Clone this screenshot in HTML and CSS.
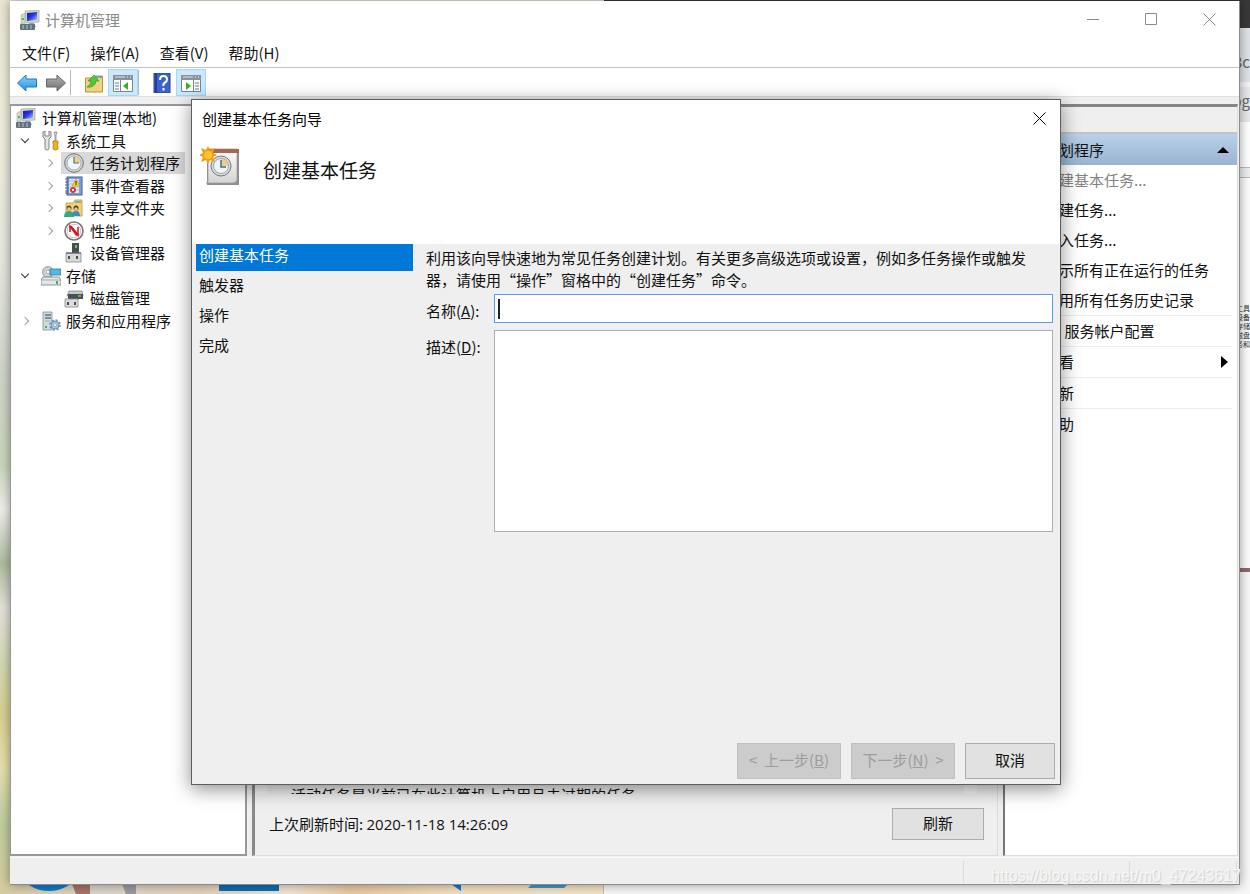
FILE: index.html
```html
<!DOCTYPE html>
<html lang="zh-CN">
<head>
    <meta charset="UTF-8">
    <meta name="viewport" content="width=device-width, initial-scale=1.0">
    <title>计算机管理</title>
    <link rel="stylesheet" href="styles.css">
</head>
<body>
    <!-- shared icons -->
    <svg class="defs" aria-hidden="true">
        <defs>
            <linearGradient id="g-screen" x1="0" y1="0" x2="1" y2="1">
                <stop offset="0" stop-color="#1414a8"/>
                <stop offset=".5" stop-color="#2a3be0"/>
                <stop offset="1" stop-color="#b8d0ff"/>
            </linearGradient>
            <linearGradient id="g-blue" x1="0" y1="0" x2="0" y2="1">
                <stop offset="0" stop-color="#8fd6fb"/>
                <stop offset="1" stop-color="#1b8fe0"/>
            </linearGradient>
            <linearGradient id="g-gray" x1="0" y1="0" x2="0" y2="1">
                <stop offset="0" stop-color="#b4b4b4"/>
                <stop offset="1" stop-color="#6e6e6e"/>
            </linearGradient>
            <linearGradient id="g-page" x1="0" y1="0" x2="0" y2="1">
                <stop offset="0" stop-color="#ffffff"/>
                <stop offset="1" stop-color="#d4d4d4"/>
            </linearGradient>
        </defs>
        <symbol id="i-computer" viewBox="0 0 20 20">
            <path d="M5 1l14-1v12l-13 1z" fill="#d3d5c6" stroke="#9b9d90" stroke-width=".6"/>
            <path d="M7 3l10-1v8l-10 1z" fill="url(#g-screen)"/>
            <path d="M1 5l4-2v11H1z" fill="#d5d8cc" stroke="#969a90" stroke-width=".5"/>
            <rect x="2" y="8" width="2" height="2" fill="#3cc63c"/>
            <path d="M9 13h5l2 4H8z" fill="#9fa39d"/>
            <rect x="0" y="14" width="15" height="6" rx="1" fill="#5f747e"/>
            <path d="M2 16h2M6 16h2M10 16h2M2 18h2M6 18h2M10 18h2" stroke="#b7c4ca"/>
        </symbol>
        <symbol id="i-tools" viewBox="0 0 20 20">
            <path d="M2 1v5l2 2v9q0 2 2 2t2-2V8l2-2V1L8 0v5H4V0z" fill="#e4e4e4" stroke="#777" stroke-width=".9"/>
            <path d="M13 1h3l-1 3v6h-1V4z" fill="#ddd" stroke="#888" stroke-width=".8"/>
            <path d="M12 10h5v3l-1 1 1 1v3q-2.500 2-5 0v-3l1-1-1-1z" fill="#f5b316" stroke="#a87400" stroke-width=".7"/>
        </symbol>
        <symbol id="i-clock" viewBox="0 0 20 20">
            <circle cx="10" cy="10" r="9.300" fill="#d8d8d8" stroke="#6d6d6d"/>
            <circle cx="10" cy="10" r="7" fill="#eef6fb" stroke="#8e9aa3" stroke-width=".8"/>
            <path d="M10 10V3.500A6.500 6.500 0 0 1 16.500 10z" fill="#f2cf85"/>
            <path d="M10 4v6h5" fill="none" stroke="#5a6e7d" stroke-width="1.200"/>
        </symbol>
        <symbol id="i-event" viewBox="0 0 20 20">
            <rect x="3" y="1" width="15" height="18" fill="#7f9fd2" stroke="#3f5f9c"/>
            <rect x="5" y="3" width="10" height="14" fill="#dfe8f6"/>
            <path d="M5 5h10M5 8h10M5 11h10M5 14h10" stroke="#8aa6d6" stroke-width=".7"/>
            <path d="M1 3h4M1 6h4M1 9h4M1 12h4M1 15h4M1 17h4" stroke="#596b8e"/>
            <path d="M12 3l4 7H8z" fill="#ffd42e" stroke="#b99008" stroke-width=".6"/>
            <path d="M12 5v4" stroke="#222"/>
            <circle cx="9" cy="14" r="3" fill="#df3737"/>
            <path d="M8 13l2 2M10 13l-2 2" stroke="#fff" stroke-width=".9"/>
        </symbol>
        <symbol id="i-share" viewBox="0 0 20 20">
            <path d="M2 5h7l2-3h7v16H2z" fill="#f2d27a" stroke="#bd9434" stroke-width=".8"/>
            <path d="M11 4h6" stroke="#4aa0df" stroke-width="1.300"/>
            <circle cx="5" cy="10" r="2.500" fill="#6b4a21"/>
            <circle cx="5" cy="11" r="1.800" fill="#eec29a"/>
            <path d="M0 19q0-6 5-6t5 6z" fill="#35a981"/>
            <circle cx="12" cy="10" r="2.500" fill="#513716"/>
            <circle cx="12" cy="11" r="1.800" fill="#eec29a"/>
            <path d="M8 18q0-5 4-5t4 5z" fill="#3f8cc0"/>
        </symbol>
        <symbol id="i-perf" viewBox="0 0 20 20">
            <circle cx="10" cy="10" r="9" fill="#fff" stroke="#777" stroke-width="1.600"/>
            <circle cx="10" cy="10" r="6.800" fill="none" stroke="#aaa" stroke-width=".7"/>
            <path d="M6 11V5l8 9V6" fill="none" stroke="#d42020" stroke-width="1.600"/>
            <path d="M5 5h3l7 9-3 1z" fill="#c81e1e"/>
        </symbol>
        <symbol id="i-device" viewBox="0 0 20 20">
            <rect x="8" y="0" width="7" height="11" fill="#4a4e50"/>
            <rect x="11" y="2" width="2" height="3" fill="#50d050"/>
            <path d="M2 10h15v9H2z" fill="#d7d9da" stroke="#85898b" stroke-width=".8"/>
            <path d="M2 10h15" stroke="#555"/>
            <path d="M4 13h2v3H4zM12 13h2v3h-2z" fill="#4b4f52"/>
        </symbol>
        <symbol id="i-storage" viewBox="0 0 20 20">
            <circle cx="7" cy="6" r="5.500" fill="#c8d0d4" stroke="#899297" stroke-width=".8"/>
            <circle cx="7" cy="6" r="1.600" fill="#fff" stroke="#899297" stroke-width=".5"/>
            <path d="M9 3h11v6H9z" fill="#55b6df" stroke="#2d7ea3" stroke-width=".8"/>
            <path d="M2 11h16l2 3v5H0v-5z" fill="#e3e5e6" stroke="#777d81" stroke-width=".8"/>
            <path d="M0 14h20" stroke="#9ca1a4" stroke-width=".8"/>
            <rect x="15" y="15" width="2" height="3" fill="#49b431"/>
        </symbol>
        <symbol id="i-disk" viewBox="0 0 20 20">
            <path d="M5 3h13l1 5H3z" fill="#c6c9cb" stroke="#777c7f" stroke-width=".7"/>
            <rect x="4" y="6" width="15" height="5" fill="#4a4e50"/>
            <path d="M14 8h3" stroke="#58df58" stroke-width="1.500"/>
            <path d="M1 11h13v8H1z" fill="#dadcdd" stroke="#85898b" stroke-width=".8"/>
            <path d="M3 14h2v3H3zM10 14h2v3h-2z" fill="#4b4f52"/>
        </symbol>
        <symbol id="i-services" viewBox="0 0 20 20">
            <path d="M2 1h9v18H2z" fill="#cfdadd" stroke="#7f8f96" stroke-width=".8"/>
            <path d="M4 4h6M4 7h6" stroke="#5c7681" stroke-width="1.300"/>
            <path d="M4 10h5" stroke="#9bb0b8"/>
            <rect x="4" y="15" width="2" height="2" fill="#4bb34b"/>
            <circle cx="14" cy="14" r="4" fill="#a9c6de" stroke="#6a92b4"/>
            <circle cx="14" cy="14" r="5" fill="none" stroke="#6a92b4" stroke-width="1.600" stroke-dasharray="2 1.930"/>
            <circle cx="14" cy="14" r="1.500" fill="#fff" stroke="#6a92b4" stroke-width=".6"/>
        </symbol>
    </svg>

    <div class="browser" aria-hidden="true">
        <div class="browser-tabs"></div>
        <div class="browser-address">3c</div>
        <div class="browser-bookmarks">pg</div>
        <div class="browser-row"></div>
        <div class="browser-row short"></div>
        <div class="browser-page">
            <div>工具</div>
            <div>设备</div>
            <div>存储</div>
            <div>磁盘</div>
            <div>服务和</div>
        </div>
    </div>
    <div class="wallpaper-shapes" aria-hidden="true">
        <svg width="604" height="10" viewBox="0 0 604 10">
            <ellipse cx="49" cy="-10" rx="26" ry="17" fill="#0f7bd0"/>
            <path d="M72 0h18v10H76z" fill="#9b5d50" opacity=".8"/>
            <path d="M122 0h14v10h-10z" fill="#8b8d95" opacity=".8"/>
            <path d="M219 0h60v7h-60z" fill="#0a6fb8"/>
            <path d="M451 0h10v7z" fill="#0a7be0"/>
            <path d="M532 0h36l-4 4h-36z" fill="#3f98c6"/>
            <path d="M604 0v10" stroke="#999"/>
        </svg>
    </div>

    <div class="window">
        <header class="titlebar">
            <svg class="icon"><use href="#i-computer"/></svg>
            <h1>计算机管理</h1>
            <div class="window-buttons">
                <button aria-label="最小化"><svg width="13" height="13"><path d="M0 6.500h12"/></svg></button>
                <button aria-label="最大化"><svg width="13" height="13"><path d="M.5.5h11v11H.5z"/></svg></button>
                <button aria-label="关闭"><svg width="13" height="13"><path d="M.5.5l12 12M12.500.5l-12 12"/></svg></button>
            </div>
        </header>
        <nav class="menubar">
            <a href="#">文件(F)</a>
            <a href="#">操作(A)</a>
            <a href="#">查看(V)</a>
            <a href="#">帮助(H)</a>
        </nav>
        <div class="toolbar">
            <button aria-label="后退">
                <svg viewBox="0 0 20 20"><path d="M.5 10L9 2v4h10.500v8H9v4z" fill="url(#g-blue)" stroke="#1f78b8"/></svg>
            </button>
            <button aria-label="前进">
                <svg viewBox="0 0 20 20"><path d="M19.500 10L11 2v4H.5v8H11v4z" fill="url(#g-gray)" stroke="#666"/></svg>
            </button>
            <span class="separator"></span>
            <button aria-label="向上一级">
                <svg viewBox="0 0 20 20"><path d="M1.500 5h8l2-2h7v16h-17z" fill="#f2d184" stroke="#b8913b"/><path d="M12 4h6" stroke="#4c9fe0" stroke-width="1.500"/><path d="M3 14q4-2 4-6H4l6-6 5 6h-3q-1 7-9 6z" fill="#52c63b" stroke="#31961f" stroke-width=".7"/></svg>
            </button>
            <button class="active" aria-label="显示/隐藏控制台树">
                <svg viewBox="0 0 20 20"><path d="M.5 2.500h19v16H.5z" fill="#fff" stroke="#7d848c"/><path d="M0 2h20v5H0z" fill="#8a9199"/><path d="M2 4h10" stroke="#dfe3e6"/><path d="M14 4h1M17 4h1" stroke="#fff"/><path d="M7.500 7v11" stroke="#7d848c"/><path d="M2 10h4M2 13h4M2 16h4" stroke="#4f7cb3"/><path d="M15 9v8l-5-4z" fill="#37b022"/></svg>
            </button>
            <span class="separator"></span>
            <button aria-label="帮助">
                <svg viewBox="0 0 20 20"><path d="M2 0h16v20H2z" fill="#3c62cc" stroke="#22408f"/><path d="M3 0h2v20H3z" fill="#233f97"/><path d="M8 7q0-4 3.500-4T15 6.500q0 2-2 3T11.500 13M11.500 15v2.500" fill="none" stroke="#fff" stroke-width="2"/></svg>
            </button>
            <button class="active" aria-label="显示/隐藏操作窗格">
                <svg viewBox="0 0 20 20"><path d="M.5 2.500h19v16H.5z" fill="#fff" stroke="#7d848c"/><path d="M0 2h20v5H0z" fill="#8a9199"/><path d="M2 4h10" stroke="#dfe3e6"/><path d="M14 4h1M17 4h1" stroke="#fff"/><path d="M12.500 7v11" stroke="#7d848c"/><path d="M14 10h4M14 13h4M14 16h4" stroke="#4f7cb3"/><path d="M5 9v8l5-4z" fill="#37b022"/></svg>
            </button>
        </div>

        <main class="panes">
            <ul class="tree">
                <li class="root"><svg class="icon"><use href="#i-computer"/></svg><span>计算机管理(本地)</span></li>
                <li class="level-1 open"><svg class="icon"><use href="#i-tools"/></svg><span>系统工具</span></li>
                <li class="level-2 closed selected"><div class="node"><svg class="icon"><use href="#i-clock"/></svg><span>任务计划程序</span></div></li>
                <li class="level-2 closed"><svg class="icon"><use href="#i-event"/></svg><span>事件查看器</span></li>
                <li class="level-2 closed"><svg class="icon"><use href="#i-share"/></svg><span>共享文件夹</span></li>
                <li class="level-2 closed"><svg class="icon"><use href="#i-perf"/></svg><span>性能</span></li>
                <li class="level-2"><svg class="icon"><use href="#i-device"/></svg><span>设备管理器</span></li>
                <li class="level-1 open"><svg class="icon"><use href="#i-storage"/></svg><span>存储</span></li>
                <li class="level-2"><svg class="icon"><use href="#i-disk"/></svg><span>磁盘管理</span></li>
                <li class="level-1 closed"><svg class="icon"><use href="#i-services"/></svg><span>服务和应用程序</span></li>
            </ul>

            <section class="summary">
                <div class="summary-scroll"><p>活动任务是当前已在此计算机上启用且未过期的任务</p></div>
                <div class="summary-footer">
                    <span>上次刷新时间: <time>2020-11-18 14:26:09</time></span>
                    <button class="button">刷新</button>
                </div>
            </section>

            <aside class="actions">
                <div class="actions-title"></div>
                <h2>任务计划程序</h2>
                <ul>
                    <li class="disabled">创建基本任务...</li>
                    <li>创建任务...</li>
                    <li>导入任务...</li>
                    <li>显示所有正在运行的任务</li>
                    <li>启用所有任务历史记录</li>
                    <li class="ruled">AT 服务帐户配置</li>
                    <li class="ruled submenu">查看</li>
                    <li class="ruled">刷新</li>
                    <li class="ruled">帮助</li>
                </ul>
            </aside>
        </main>
        <footer class="statusbar"><span></span><span></span></footer>
    </div>

    <div class="dialog" role="dialog" aria-labelledby="dialog-title">
        <header class="dialog-titlebar">
            <span id="dialog-title">创建基本任务向导</span>
            <button aria-label="关闭"><svg width="13" height="13"><path d="M.5.5l12 12M12.500.5l-12 12"/></svg></button>
        </header>
        <div class="dialog-heading">
            <svg width="40" height="40" viewBox="0 0 40 40">
                <path d="M7 3h32v36H7z" fill="#8f8f8f"/>
                <path d="M8 3h29v31q-1 3-4 3H6q3-1 2-4z" fill="url(#g-page)" stroke="#999" stroke-width=".7"/>
                <path d="M8 3h31v4H8z" fill="#a5674f"/>
                <circle cx="21" cy="20" r="10" fill="#d9dde0" stroke="#777"/>
                <circle cx="21" cy="20" r="7.500" fill="#eef5fa" stroke="#99a4ac"/>
                <path d="M21 20v-7a7 7 0 0 1 7 7z" fill="#f0cd88"/>
                <path d="M21 14v7h5" fill="none" stroke="#4e6b80" stroke-width="1.500"/>
                <path d="M8 0l2 4 5-2-2 5 4 2-4 2 2 5-5-2-2 4-2-4-5 2 2-5-4-2 4-2-2-5 5 2z" fill="#f79a10"/>
                <circle cx="8" cy="9" r="4" fill="#ffc431"/>
            </svg>
            <h2>创建基本任务</h2>
        </div>
        <div class="dialog-body">
            <ol class="steps">
                <li class="current">创建基本任务</li>
                <li>触发器</li>
                <li>操作</li>
                <li>完成</li>
            </ol>
            <form class="form">
                <p>利用该向导快速地为常见任务创建计划。有关更多高级选项或设置，例如多任务操作或触发器，请使用“操作”窗格中的“创建任务”命令。</p>
                <label for="name">名称(<u>A</u>):</label>
                <input type="text" id="name">
                <label for="description">描述(<u>D</u>):</label>
                <textarea id="description"></textarea>
            </form>
        </div>
        <footer class="dialog-buttons">
            <button class="button" disabled>&lt;&nbsp; 上一步(<u>B</u>)</button>
            <button class="button" disabled>下一步(<u>N</u>) &nbsp;&gt;</button>
            <button class="button cancel">取消</button>
        </footer>
    </div>

    <div class="watermark">https://blog.csdn.net/m0_47243617</div>
</body>
</html>
```
FILE: styles.css
```css
* {
    box-sizing: border-box;
}
body {
    position: relative;
    display: flex;
    min-height: 100vh;
    margin: 0;
    padding: 1px 10px 9px;
    overflow: hidden;
    font-family: "Noto Sans CJK SC", sans-serif;
    font-size: 15px;
    line-height: 22px;
    color: #111;
    background: linear-gradient(180deg, #e9e6d2 0%, #efeddc 15%, #e6e8e0 30%, #d0d5cb 42%, #cbd6bb 52%, #f0efec 57%, #aebd9f 63%, #e6e2dc 68%, #d4d9b4 74%, #d9d193 80%, #e8dfae 86%, #c0cf9f 92%, #d6cba0 100%);
}
h1, h2, p, ul, ol {
    margin: 0;
    padding: 0;
    font-size: 15px;
    font-weight: normal;
}
ul, ol {
    list-style: none;
}
button {
    padding: 0;
    border: none;
    background: none;
    font: inherit;
    color: inherit;
}
.defs {
    position: absolute;
    width: 0;
    height: 0;
}
.icon {
    flex: none;
    width: 20px;
    height: 20px;
}

/* things behind the window */
.browser {
    position: absolute;
    top: 0;
    right: 0;
    bottom: 0;
    left: 604px;
    background: #f7f7f7;
    color: #666;
    text-align: right;
}
.browser-tabs {
    height: 28px;
    background: #383838;
}
.browser-address {
    height: 54px;
    padding-top: 23px;
    background: #dfe3e8;
}
.browser-bookmarks {
    height: 40px;
    padding-top: 3px;
    border-top: 5px solid #f4f4f4;
    background: #e6e8eb;
}
.browser-row {
    height: 46px;
    border-bottom: 1px solid #bbb;
    background: #fff;
}
.browser-row.short {
    height: 10px;
    background: #eee;
}
.browser-page {
    height: 394px;
    padding-top: 126px;
    border-bottom: 4px solid #8c6c6c;
    background: #fcfcfc;
    font-size: 7px;
    line-height: 9px;
    color: #333;
}
.wallpaper-shapes {
    position: absolute;
    left: 0;
    bottom: 0;
    height: 10px;
    background: linear-gradient(90deg, #d6cba0 0, #d9d5cc 100px, #e3d0b8 200px, #f1e4d2 290px, #e8c9a2 350px, #f3dfbf 460px, #efe3c4 604px);
}
.wallpaper-shapes svg {
    display: block;
}

/* main window */
.window {
    position: relative;
    display: flex;
    flex: 1;
    flex-direction: column;
    min-width: 0;
    border: 1px solid #8c8c8c;
    border-width: 0 1px 1px 0;
    background: #efefef;
    box-shadow: 0 0 10px rgba(0, 0, 0, 0.4);
}
.titlebar {
    display: flex;
    align-items: center;
    gap: 5px;
    height: 37px;
    padding: 0 16px 0 10px;
    background: #fff;
    color: #8a8a8a;
}
.window-buttons {
    display: flex;
    gap: 45px;
    margin-left: auto;
    padding-right: 7px;
}
.window-buttons svg,
.dialog-titlebar svg {
    display: block;
    fill: none;
    stroke: #8a8a8a;
}
.menubar {
    display: flex;
    align-items: center;
    gap: 20px;
    height: 30px;
    padding: 0 12px;
    border-bottom: 1px solid #bcc6cc;
    background: #fff;
}
.menubar a {
    color: inherit;
    text-decoration: none;
}
.toolbar {
    display: flex;
    align-items: center;
    height: 29px;
    padding: 1px 0 0 2px;
    border-bottom: 1px solid #e0e0e0;
    background: #fff;
}
.toolbar button {
    display: grid;
    place-items: center;
    width: 29px;
    height: 27px;
}
.toolbar svg {
    width: 20px;
    height: 20px;
}
.toolbar .active {
    width: 30px;
    border: 1px solid #a9d6f5;
    background: #cce8ff;
}
.toolbar .separator {
    width: 1px;
    height: 25px;
    margin-right: 8px;
    background: #b8b8b8;
}
.panes {
    display: grid;
    flex: 1;
    grid-template-columns: 237px 1fr 235px;
    gap: 5px;
    padding: 7px 1px 1px 0;
}

/* console tree */
.tree {
    display: grid;
    grid-auto-rows: 22px 23px;
    align-content: start;
    padding-top: 1px;
    border: 2px solid #9499a0;
    border-width: 2px 2px 2px 1px;
    background: #fff;
}
.tree li {
    position: relative;
    display: flex;
    align-items: center;
    gap: 6px;
    padding-left: 5px;
}
.tree .level-1 {
    gap: 5px;
    padding-left: 30px;
}
.tree .level-2 {
    padding-left: 53px;
}
.tree .level-2.selected {
    padding-left: 50px;
}
.node {
    display: flex;
    align-items: center;
    gap: 6px;
    height: 22px;
    padding: 0 5px 0 3px;
    background: #d9d9d9;
}
.open::before,
.closed::before {
    content: "";
    position: absolute;
    left: 11px;
    width: 5px;
    height: 5px;
    border: solid #a0a0a0;
    border-width: 1px 1px 0 0;
    transform: rotate(45deg);
}
.open::before {
    margin-top: -3px;
    border-color: #333;
    transform: rotate(135deg);
}
.level-2.closed::before {
    left: 35px;
}

/* centre pane */
.summary {
    display: flex;
    flex-direction: column;
    justify-content: flex-end;
    border: 1px solid #dcdcdc;
    border-left: 3px solid #8a8a8a;
}
.summary-scroll {
    height: 10px;
    margin-right: 20px;
    padding-left: 24px;
    border: solid #f6f6f6;
    border-width: 0 13px 0 12px;
    overflow: hidden;
}
.summary-footer {
    display: flex;
    align-items: center;
    justify-content: space-between;
    height: 61px;
    padding: 0 13px 2px 14px;
}
.summary time {
    font-family: "Open Sans", "Noto Sans CJK SC", sans-serif;
}
.button {
    height: 36px;
    padding-bottom: 2px;
    border: 1px solid #adadad;
    background: #e1e1e1;
}
.summary .button {
    width: 92px;
    height: 32px;
}

/* actions pane */
.actions {
    border: 1px solid #dedede;
    border-left: 2px solid #777;
    border-top: 3px solid #858585;
    background: #fff;
}
.actions-title {
    height: 27px;
    border-bottom: 2px solid #c4c4c4;
    background: #efefef;
}
.actions h2 {
    display: flex;
    align-items: center;
    justify-content: space-between;
    height: 31px;
    padding: 0 8px 0 9px;
    background: linear-gradient(180deg, #b9d1ea, #99b4d1);
}
.actions h2::after {
    content: "";
    border: solid transparent;
    border-width: 0 6px 6px;
    border-bottom-color: #000;
}
.actions li {
    height: 30px;
    margin-right: 5px;
    padding-left: 39px;
    line-height: 30px;
}
.actions .disabled {
    color: #838383;
}
.actions .ruled {
    height: 31px;
    border-top: 1px solid #ececec;
}
.actions .submenu {
    display: flex;
    align-items: center;
    justify-content: space-between;
}
.submenu::after {
    content: "";
    margin-right: 4px;
    border: solid transparent;
    border-width: 6px 0 6px 7px;
    border-left-color: #000;
}
.statusbar {
    display: flex;
    justify-content: flex-end;
    height: 27px;
    padding: 3px 2px 1px;
    border-top: 1px solid #fafafa;
}
.statusbar span {
    width: 107px;
    border-right: 1px solid #dcdcdc;
}
.statusbar span:first-child {
    width: 167px;
    border-left: 1px solid #dcdcdc;
}

/* wizard */
.dialog {
    position: absolute;
    top: 99px;
    right: 189px;
    bottom: 109px;
    left: 191px;
    display: flex;
    flex-direction: column;
    border: 1px solid #5e5e5e;
    background: #efefef;
    box-shadow: 0 4px 18px rgba(0, 0, 0, 0.45);
}
.dialog-titlebar {
    display: flex;
    align-items: center;
    justify-content: space-between;
    height: 37px;
    padding: 0 14px 0 10px;
    background: #fff;
    color: #000;
}
.dialog-titlebar svg {
    stroke: #000;
}
.dialog-heading {
    display: flex;
    gap: 23px;
    height: 107px;
    padding: 9px 8px;
    background: #fff;
}
.dialog-heading h2 {
    font-size: 19px;
    line-height: 48px;
}
.dialog-body {
    display: flex;
    flex: 1;
    gap: 13px;
    padding: 0 7px 0 4px;
}
.steps {
    display: grid;
    align-content: start;
    gap: 3px;
    width: 217px;
}
.steps li {
    height: 27px;
    padding-left: 3px;
    line-height: 21px;
}
.steps .current {
    background: #0078d7;
    color: #fff;
}
.form {
    display: grid;
    flex: 1;
    grid-template-columns: 68px 1fr;
    align-content: start;
    row-gap: 7px;
}
.form p {
    grid-column: 1 / 3;
    height: 43px;
    padding: 3px 18px 0 0;
}
.form label {
    padding-top: 6px;
}
.form input,
.form textarea {
    display: block;
    width: 100%;
    height: 29px;
    margin: 0;
    padding: 3px;
    border: 1px solid #abadb3;
    border-radius: 0;
    background: #fff;
    font: inherit;
    outline: none;
    resize: none;
}
.form input {
    border-color: #569de5;
    background: linear-gradient(#222, #222) 3px 4px / 2px 20px no-repeat #fff;
}
.form textarea {
    height: 202px;
}
.dialog-buttons {
    display: flex;
    justify-content: flex-end;
    gap: 10px;
    padding: 0 5px 5px;
}
.dialog-buttons .button {
    width: 104px;
}
.dialog-buttons .cancel {
    width: 90px;
}
.button:disabled {
    border-color: #bfbfbf;
    background: #cccccc;
    color: #9d9d9d;
}
.watermark {
    position: absolute;
    right: 9px;
    bottom: 8px;
    font: 16px/20px "Liberation Sans", Arial, sans-serif;
    color: #f7f7f7;
    text-shadow: 1px 1px 1px #cccccc;
}
```
